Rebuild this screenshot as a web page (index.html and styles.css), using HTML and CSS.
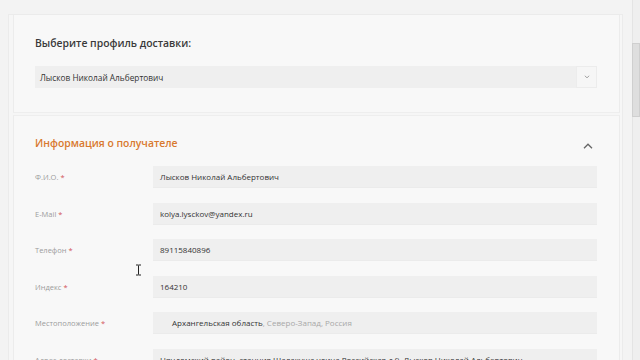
FILE: index.html
```html
<!DOCTYPE html>
<html lang="ru">
<head>
<meta charset="utf-8">
<title>Профиль доставки</title>
<link rel="stylesheet" href="styles.css">
</head>
<body>
<div class="page">
  <main class="main">
    <div class="wrap">
      <section class="panel panel-profile">
        <h2 class="title">Выберите профиль доставки:</h2>
        <div class="select">
          <span class="select-value">Лысков Николай Альбертович</span>
          <span class="select-btn">
            <svg width="6" height="4" viewBox="0 0 6 4"><path d="M0.8 0.8 L3 2.8 L5.2 0.8" fill="none" stroke="#9a9a9a" stroke-width="0.9"/></svg>
          </span>
        </div>
      </section>
      <section class="panel panel-info">
        <div class="info-head">
          <h2 class="title orange">Информация о получателе</h2>
          <svg class="chev-up" width="10" height="6" viewBox="0 0 10 6"><path d="M1 5.2 L5 1.2 L9 5.2" fill="none" stroke="#666" stroke-width="1.3"/></svg>
        </div>
        <div class="rows">
          <div class="row">
            <label class="label">Ф.И.О. <span class="req">*</span></label>
            <div class="input">Лысков Николай Альбертович</div>
          </div>
          <div class="row">
            <label class="label">E-Mail <span class="req">*</span></label>
            <div class="input">kolya.lysckov@yandex.ru</div>
          </div>
          <div class="row">
            <label class="label">Телефон <span class="req">*</span></label>
            <div class="input">89115840896</div>
          </div>
          <div class="row">
            <label class="label">Индекс <span class="req">*</span></label>
            <div class="input">164210</div>
          </div>
          <div class="row">
            <label class="label">Местоположение <span class="req">*</span></label>
            <div class="input input-loc">Архангельская область<span class="muted">, Северо-Запад, Россия</span></div>
          </div>
          <div class="row row-area">
            <label class="label">Адрес доставки <span class="req">*</span></label>
            <div class="input input-area">Няндомский район, станция Шалакуша улица Российская д.9, Лысков Николай Альбертович</div>
          </div>
        </div>
      </section>
    </div>
  </main>
  <div class="scrollbar"><div class="thumb"></div></div>
</div>
<svg class="cursor" width="7" height="12" viewBox="0 0 7 12"><path d="M1 1 H3 M4 1 H6 M3.5 1.5 V10.5 M1 11 H3 M4 11 H6 M3 1 Q3.5 1.2 4 1 M3 11 Q3.5 10.8 4 11" fill="none" stroke="#222" stroke-width="1"/></svg>
</body>
</html>
```
FILE: styles.css
```css
* { box-sizing: border-box; }
html, body { margin: 0; height: 100%; }
body {
  background: #f3f3f3;
  font-family: "Open Sans", "Liberation Sans", sans-serif;
  color: #333;
  overflow: hidden;
  position: relative;
}
.page { display: flex; height: 360px; }
.main { flex: 1; padding: 14px 9px 0 8px; }
.wrap {
  border: 1px solid #ebebeb;
  border-bottom: none;
  background: #f6f6f6;
  padding: 0 2px 0 4px;
  height: 360px;
}
.panel {
  background: #f8f8f8;
  border-left: 1px solid #ececec;
  border-right: 1px solid #ececec;
  padding: 0 22px 0 21px;
}
.panel-profile { height: 98px; padding-top: 20px; border-bottom: 1px solid #eeeeee; }
.panel-info { margin-top: 2px; border-top: 1px solid #eeeeee; padding-top: 19px; height: 260px; }
.title {
  margin: 0;
  font-size: 10.4px;
  font-weight: 600;
  line-height: 16px;
  color: #3a3a3a;
}
.title.orange { color: #d8792f; }
.select {
  margin-top: 15px;
  height: 22px;
  background: #efefef;
  display: flex;
  align-items: center;
}
.select-value { flex: 1; padding-left: 5px; font-size: 8.3px; color: #333; }
.select-btn {
  width: 21px; height: 22px;
  background: #f6f6f6;
  border: 1px solid #ececec;
  display: flex; align-items: center; justify-content: center;
}
.info-head { display: flex; align-items: center; justify-content: space-between; height: 16px; }
.chev-up { margin-right: 4px; margin-top: 6px; }
.rows { margin-top: 15px; display: flex; flex-direction: column; gap: 14.6px; }
.row { display: flex; align-items: center; height: 22px; }
.label {
  width: 118px;
  font-size: 7.5px;
  color: #9c9c9c;
}
.req { color: #d2555a; }
.input {
  flex: 1;
  height: 22px;
  background: #efefef;
  border-bottom: 1px solid #ebebeb;
  padding-left: 7px;
  display: flex; align-items: center;
  font-size: 8px;
  color: #333;
  white-space: nowrap;
  overflow: hidden;
}
.input-loc { padding-left: 19px; }
.muted { color: #a8a8a8; }
.row-area { align-items: flex-start; }
.row-area .label { padding-top: 6px; }
.input-area { align-items: flex-start; padding-top: 5px; height: 40px; }
.scrollbar {
  width: 8px;
  background: #efefef;
  border-left: 1px solid #e4e4e4;
  padding-top: 43px;
}
.thumb {
  height: 74px;
  background: #dedede;
  border: 1px solid #cfcfcf;
  margin-left: -1px;
}
.cursor { position: absolute; left: 135px; top: 264px; }
```
